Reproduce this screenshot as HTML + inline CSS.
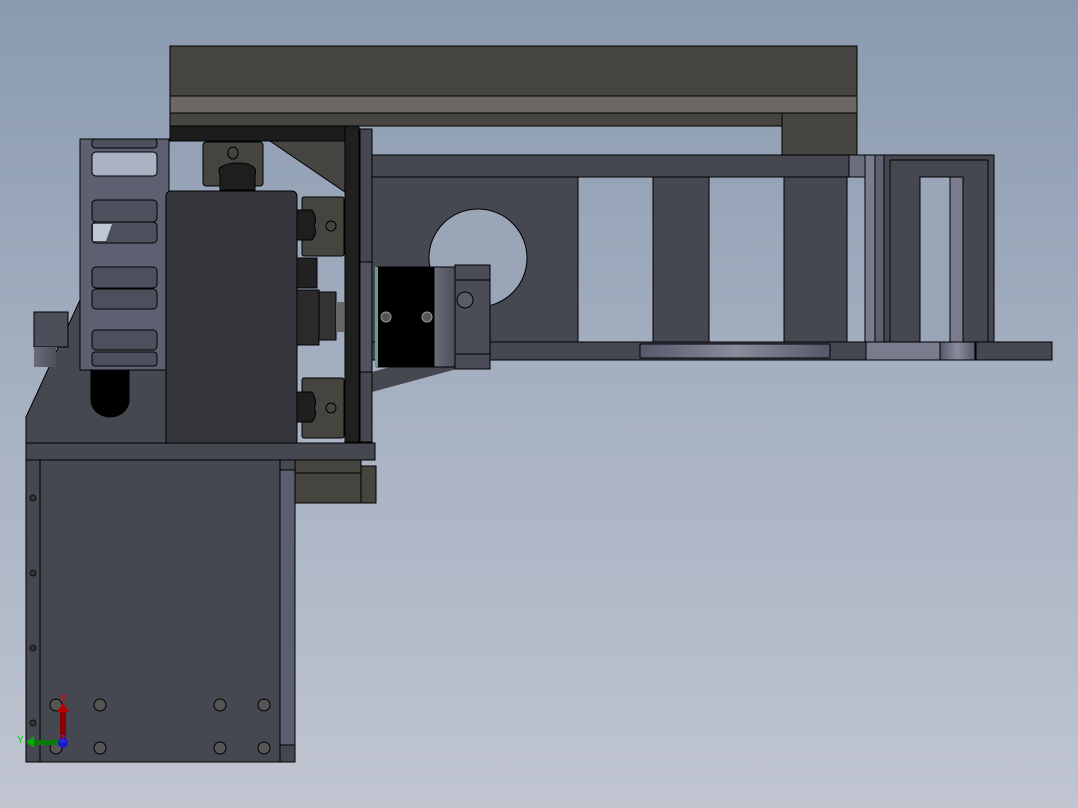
<!DOCTYPE html>
<html><head><meta charset="utf-8"><style>
html,body{margin:0;padding:0;width:1078px;height:808px;overflow:hidden}
body{background:linear-gradient(180deg,#8b9aaf 0%,#a6b1c2 50%,#c0c5d0 100%)}
svg{position:absolute;left:0;top:0}
</style></head><body>
<svg width="1078" height="808" viewBox="0 0 1078 808" xmlns="http://www.w3.org/2000/svg" stroke="#000" stroke-width="1">
<defs>
<linearGradient id="gb" x1="0" x2="1"><stop offset="0" stop-color="#55586a"/><stop offset="0.5" stop-color="#8a8c9c"/><stop offset="1" stop-color="#55586a"/></linearGradient>
<linearGradient id="gm" x1="0" x2="1"><stop offset="0" stop-color="#6a6c7a"/><stop offset="1" stop-color="#4c4f5a"/></linearGradient>
</defs>
<!-- top beam -->
<rect x="170" y="46" width="687" height="50" fill="#464542"/>
<rect x="170" y="96" width="687" height="17" fill="#6b6762"/>
<rect x="170" y="113" width="687" height="13" fill="#464542"/>
<rect x="782" y="113" width="75" height="42" fill="#464542"/>
<rect x="170" y="126" width="175" height="15" fill="#1c1c1c"/>
<polygon points="270,141 345,141 345,192" fill="#464542"/>
<!-- frame right -->
<rect x="372" y="155" width="477" height="22" fill="#454851"/>
<rect x="849" y="155" width="26" height="22" fill="#6c6e7e"/>
<rect x="372" y="177" width="206" height="165" fill="#454851"/>
<circle cx="478" cy="258" r="49" fill="#9aa6b8"/>
<rect x="653" y="177" width="56" height="165" fill="#454851"/>
<rect x="784" y="177" width="63" height="165" fill="#454851"/>
<rect x="865" y="155" width="10" height="187" fill="#7a7c8e"/>
<rect x="884" y="155" width="110" height="187" fill="#454851"/>
<rect x="890" y="160" width="98" height="182" fill="#454851"/>
<rect x="920" y="177" width="43" height="165" fill="#9aa6b8"/>
<rect x="950" y="177" width="13" height="165" fill="#7a7c8e"/>
<rect x="875" y="155" width="9" height="187" fill="#5f6172"/>
<rect x="372" y="342" width="680" height="18" fill="#454851"/>
<rect x="640" y="344" width="190" height="14" fill="url(#gb)"/>
<rect x="866" y="342" width="110" height="18" fill="#7a7c8e"/>
<rect x="940" y="342" width="35" height="18" fill="url(#gb)"/>
<!-- plate near motor -->
<polygon points="372,372 490,340 490,360 372,392" fill="#454851" stroke="none"/>
<rect x="360" y="129" width="12" height="313" fill="#46474f"/>
<rect x="360" y="262" width="12" height="110" fill="#50535e"/>
<rect x="345" y="126" width="14" height="316" fill="#1f1f1f"/>
<!-- motor -->
<rect x="377" y="267" width="57" height="100" fill="#000"/>
<rect x="375" y="267" width="3" height="100" fill="#6a9a94" stroke="none"/>
<rect x="434" y="267" width="21" height="100" fill="url(#gm)"/>
<rect x="455" y="265" width="35" height="104" fill="#4a4d57"/>
<line x1="455" y1="280" x2="490" y2="280"/><line x1="455" y1="354" x2="490" y2="354"/>
<circle cx="465" cy="300" r="8" fill="#5a5d68"/>
<circle cx="386" cy="317" r="5" fill="#555" stroke="#999"/>
<circle cx="427" cy="317" r="5" fill="#555" stroke="#999"/>
<!-- pulley -->
<rect x="297" y="258" width="20" height="30" fill="#222"/>
<rect x="297" y="290" width="22" height="55" fill="#2a2a2a"/>
<rect x="319" y="292" width="17" height="48" fill="#333"/>
<rect x="336" y="302" width="8" height="30" fill="#666" stroke="none"/>
<!-- chain -->
<rect x="80" y="139" width="89" height="231" fill="#5d6070"/>
<g fill="#4c4f5c">
<rect x="92" y="139" width="65" height="9" rx="3"/>
<rect x="92" y="152" width="65" height="24" rx="4" fill="#a9b3c3"/>
<rect x="92" y="200" width="65" height="22" rx="4"/>
<rect x="92" y="222" width="65" height="21" rx="4"/>
<rect x="92" y="267" width="65" height="21" rx="4"/>
<rect x="92" y="289" width="65" height="20" rx="4"/>
<rect x="92" y="330" width="65" height="20" rx="4"/>
<rect x="92" y="352" width="65" height="14" rx="3"/>
</g>
<polygon points="93,224 112,224 106,241 93,241" fill="#c0c8d4" stroke="none"/>
<!-- left base -->
<polygon points="26,443 26,417 80,300 80,370 166,370 166,443" fill="#454851"/>
<rect x="34" y="312" width="34" height="35" fill="#4c4f5a"/>
<rect x="34" y="347" width="22" height="20" fill="url(#gm)" stroke="none"/>
<path d="M91 370 H129 V400 A19 17 0 0 1 91 400 Z" fill="#000"/>
<!-- big block -->
<rect x="166" y="191" width="131" height="255" rx="5" fill="#36373c"/>
<!-- bearing blocks -->
<rect x="203" y="142" width="60" height="44" rx="3" fill="#45443f"/>
<path d="M220 186 V175 Q217 168 223 166 Q229 163 238 163 Q247 163 252 166 Q257 169 255 176 V190 H220 Z" fill="#1e1e1e"/>
<ellipse cx="233" cy="153" rx="5" ry="6" fill="none"/>
<rect x="302" y="197" width="42" height="59" rx="2" fill="#45443f"/>
<path d="M297 210 H312 Q318 220 314 226 Q318 232 312 240 H297 Z" fill="#1e1e1e"/>
<circle cx="331" cy="226" r="5" fill="none"/>
<rect x="302" y="378" width="42" height="60" rx="2" fill="#45443f"/>
<path d="M297 392 H312 Q318 402 314 408 Q318 414 312 422 H297 Z" fill="#1e1e1e"/>
<circle cx="331" cy="408" r="5" fill="none"/>
<!-- base plate -->
<rect x="26" y="443" width="349" height="17" fill="#454851"/>
<rect x="295" y="460" width="66" height="13" fill="#45443f"/>
<rect x="295" y="473" width="66" height="30" fill="#45443f"/>
<rect x="361" y="466" width="15" height="37" fill="#45443f"/>
<!-- lower box -->
<rect x="26" y="460" width="269" height="302" fill="#454851"/>
<rect x="40" y="460" width="240" height="302" fill="#454851"/>
<rect x="280" y="470" width="15" height="275" fill="#5a5e6e"/>
<g fill="#333" stroke="#111">
<circle cx="33" cy="498" r="3"/><circle cx="33" cy="573" r="3"/><circle cx="33" cy="648" r="3"/><circle cx="33" cy="723" r="3"/>
</g>
<g fill="#555" stroke="#000">
<circle cx="56" cy="705" r="6"/><circle cx="100" cy="705" r="6"/><circle cx="220" cy="705" r="6"/><circle cx="264" cy="705" r="6"/>
<circle cx="56" cy="748" r="6"/><circle cx="100" cy="748" r="6"/><circle cx="220" cy="748" r="6"/><circle cx="264" cy="748" r="6"/>
</g>
<!-- triad -->
<rect x="60" y="710" width="6" height="32" fill="#8b0000" stroke="none"/>
<polygon points="57,712 63,703 69,712" fill="#b00" stroke="none"/>
<rect x="32" y="740" width="28" height="5" fill="#0a7a0a" stroke="none"/>
<polygon points="34,736 26,742 34,748" fill="#0a0" stroke="none"/>
<circle cx="63" cy="743" r="5" fill="#1a1acc" stroke="none"/>
<text x="60" y="701" font-family="Liberation Sans,sans-serif" font-size="10" fill="#e00" stroke="none">X</text>
<text x="17" y="743" font-family="Liberation Sans,sans-serif" font-size="10" fill="#0c0" stroke="none">Y</text>
<text x="60" y="742" font-family="Liberation Sans,sans-serif" font-size="9" fill="#44f" stroke="none">Z</text>
</svg>
</body></html>
